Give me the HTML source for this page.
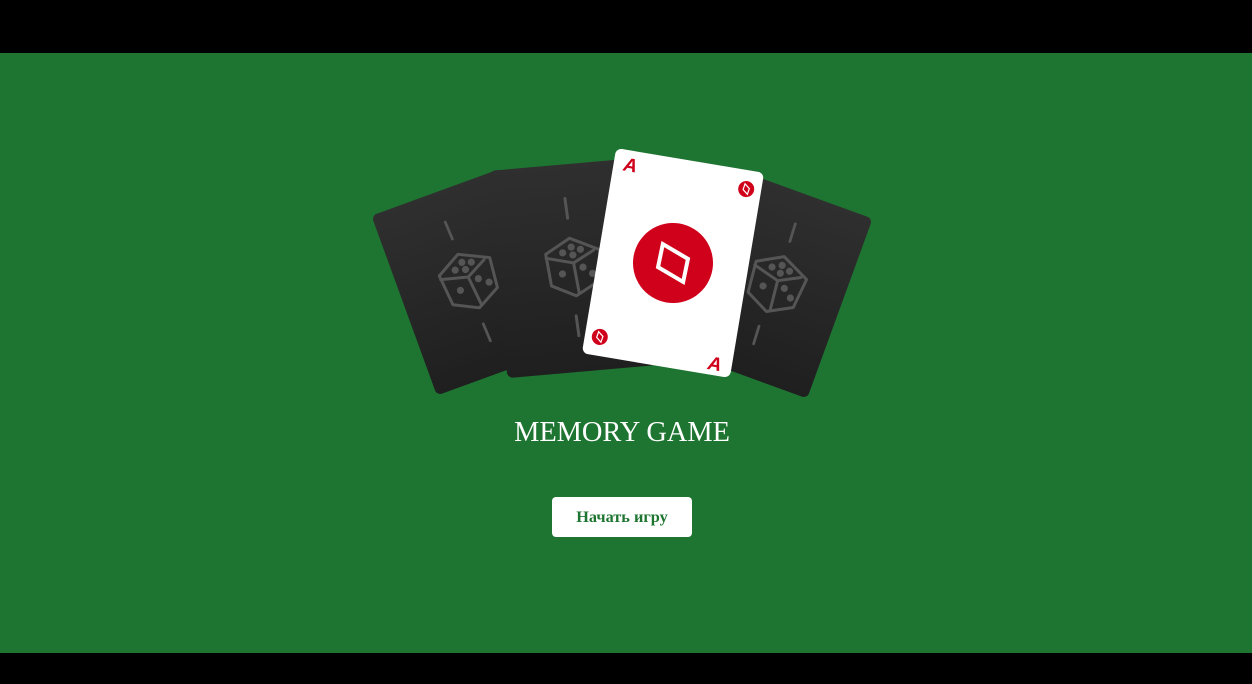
<!DOCTYPE html>
<html><head><meta charset="utf-8"><style>
html,body{margin:0;padding:0}
body{width:1252px;height:684px;background:#000;position:relative;overflow:hidden;font-family:"Liberation Serif",serif}
.main{position:absolute;left:0;top:53px;width:1252px;height:600px;background:#1e7531}
svg{position:absolute;left:0;top:0}
.title{position:absolute;left:0;width:1244px;top:417px;text-align:center;color:#fff;font-size:28.4px}
.btn{position:absolute;left:552px;top:497px;width:140px;height:40px;background:#fff;border-radius:4px;color:#1e7531;font-weight:bold;font-size:16.3px;text-align:center;line-height:40px}
</style></head><body>
<div class="main"></div>
<svg width="1252" height="684" viewBox="0 0 1252 684">
<defs>
<linearGradient id="g" x1="0" y1="0" x2="0" y2="1"><stop offset="0" stop-color="#2f2f2f"/><stop offset="1" stop-color="#1f1f1f"/></linearGradient>
<g id="dice" fill="none" stroke="#555" stroke-width="3" stroke-linejoin="round" stroke-linecap="round">
<path d="M-1,-30 L-26,-16 L-23,16 L1,28 L25,15 L28,-16 Z"/>
<path d="M-26,-12 L1,-5 L22,-16 M1,-5 L4,25"/>
<g fill="#555" stroke="none">
<circle cx="0" cy="-21" r="3.6"/><circle cx="-9" cy="-16" r="3.6"/><circle cx="9" cy="-18" r="3.6"/><circle cx="1" cy="-13" r="3.6"/>
<circle cx="-11" cy="5" r="3.6"/><circle cx="10" cy="0" r="3.6"/><circle cx="19" cy="7" r="3.6"/>
</g></g>
<g id="dark">
<rect x="-75" y="-104" width="150" height="208" rx="6" fill="url(#g)"/>
<use href="#dice"/>
<path d="M-2,-70 L-1,-50 M-1,48 L0,68" stroke="#555" stroke-width="3" stroke-linecap="round"/>
</g>
<g id="darks">
<rect x="-75" y="-104" width="150" height="208" rx="6" fill="url(#g)"/>
<use href="#dice" transform="scale(1.08)"/>
<path d="M-2,-70 L-1,-50 M-1,48 L0,68" stroke="#555" stroke-width="3" stroke-linecap="round"/>
</g>
</defs>
<g transform="translate(469,282) rotate(-20) scale(0.92)"><use href="#darks"/></g>
<g transform="translate(573,268) rotate(-5)"><use href="#dark"/></g>
<g transform="translate(775,285) rotate(20) scale(0.92)"><use href="#darks"/></g>
<g transform="translate(673,263) rotate(9.5)">
<rect x="-75" y="-104" width="150" height="208" rx="6" fill="#fff"/>
<circle cx="0" cy="0" r="40" fill="#d0021b"/>
<path d="M-10,-19 L15,-4 L10,19 L-15,4 Z" transform="rotate(-10)" fill="none" stroke="#fff" stroke-width="4" stroke-linejoin="miter"/>
<text x="-65" y="-83" font-family="Liberation Sans,sans-serif" font-weight="bold" font-style="italic" font-size="19" fill="#d0021b">A</text>
<text x="51" y="99" font-family="Liberation Sans,sans-serif" font-weight="bold" font-style="italic" font-size="19" fill="#d0021b">A</text>
<circle cx="60" cy="-85" r="8" fill="#d0021b"/>
<path d="M58,-90 L63,-86 L62,-80 L57,-84 Z" fill="none" stroke="#fff" stroke-width="1.2"/>
<circle cx="-60" cy="85" r="8" fill="#d0021b"/>
<path d="M-62,80 L-57,84 L-58,90 L-63,86 Z" fill="none" stroke="#fff" stroke-width="1.2"/>
</g>
</svg>
<div class="title">MEMORY GAME</div>
<div class="btn">Начать игру</div>
</body></html>
